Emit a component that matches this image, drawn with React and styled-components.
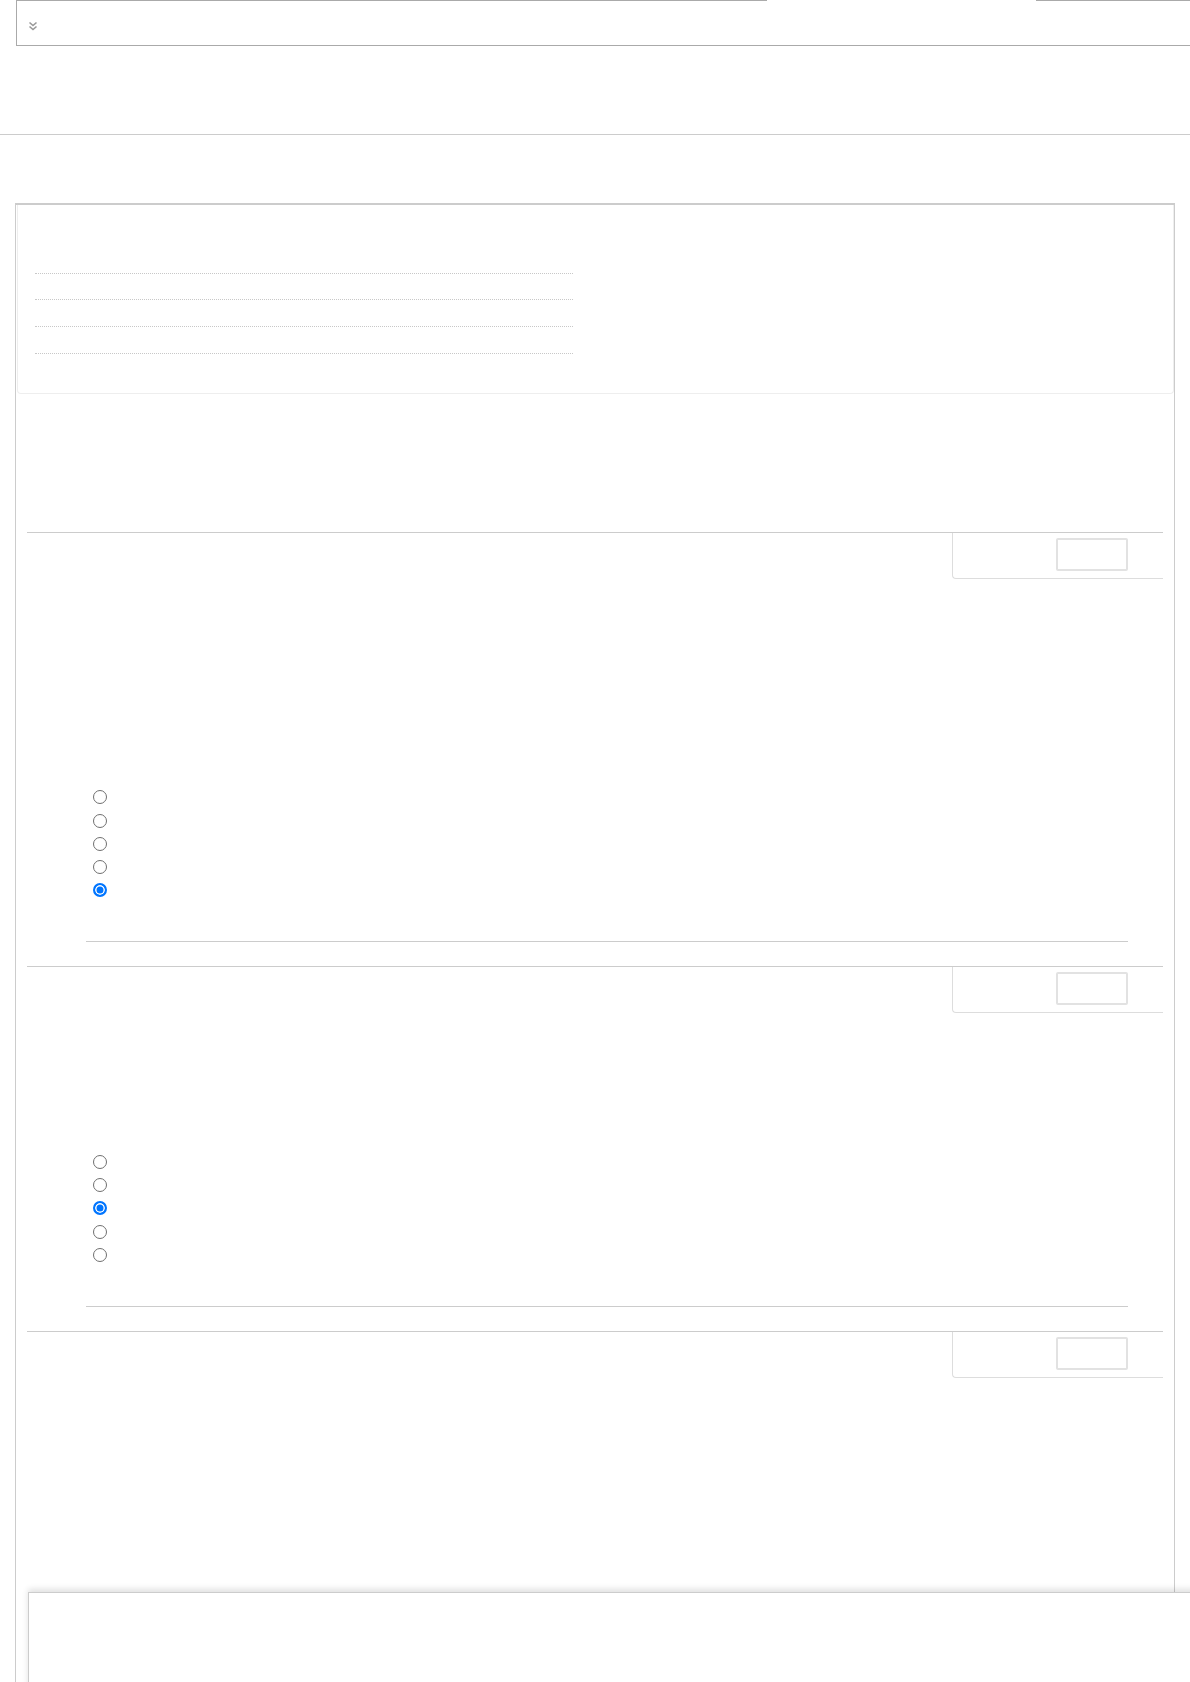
import React from 'react';
import styled, { createGlobalStyle } from 'styled-components';

const GlobalStyle = createGlobalStyle`
    html, body {
        margin: 0;
        padding: 0;
        background: #fff;
        overflow-x: hidden;
        font-family: "Liberation Sans", Arial, sans-serif;
        font-size: 14px;
        color: #333;
    }
`;

const TopBar = styled.div`
    position: relative;
    margin-left: 16px;
    width: 1200px;
    height: 44px;
    border: 1px solid #aaa;
    display: flex;
    align-items: center;
    padding-left: 11px;
    box-sizing: content-box;
    svg {
        margin-top: 5px;
    }
    &::after {
        content: '';
        position: absolute;
        top: -1px;
        left: 750px;
        width: 269px;
        height: 1px;
        background: #fff;
    }
`;

const Divider = styled.hr`
    margin: 88px 0 0;
    border: none;
    border-top: 1px solid #ccc;
    height: 0;
`;

const Panel = styled.div`
    margin: 68px 0 0 15px;
    width: 1158px;
    min-height: 1500px;
    border: 1px solid #ccc;
    border-top-width: 2px;
`;

const InfoBox = styled.div`
    margin-left: 1px;
    border: 1px solid #eee;
    border-top: none;
    border-radius: 0 0 4px 4px;
    padding: 42px 17px 39px;
`;

const DotRow = styled.div`
    width: 538px;
    height: 26.67px;
    box-sizing: border-box;
    border-bottom: 1px dotted #c8c8c8;
`;

const Question = styled.section`
    margin: ${p => p.$first ? '138px' : '0'} 11px 24px;
    border-top: 1px solid #ccc;
`;

const QuestionHead = styled.div`
    display: flex;
    justify-content: flex-end;
`;

const MarkTab = styled.div`
    width: 211px;
    height: 46px;
    padding: 5px 35px 0 0;
    box-sizing: border-box;
    display: flex;
    justify-content: flex-end;
    align-items: flex-start;
    border-left: 1px solid #ddd;
    border-bottom: 1px solid #ddd;
    border-bottom-left-radius: 4px;
`;

const MarkInput = styled.input`
    width: 72px;
    height: 33px;
    box-sizing: border-box;
    border: 2px solid #e2e2e2;
    border-radius: 2px;
    background: #fff;
    padding: 0;
`;

const Spacer = styled.div`
    height: ${p => p.$h}px;
`;

const Options = styled.div`
    display: flex;
    flex-direction: column;
`;

const OptionRow = styled.label`
    height: 23.25px;
    display: flex;
    align-items: center;
    padding-left: 66px;
`;

const Radio = styled.input.attrs({ type: 'radio' })`
    appearance: none;
    margin: 0;
    width: 14px;
    height: 14px;
    box-sizing: border-box;
    border: 1.5px solid #6f6f6f;
    border-radius: 50%;
    background: #fff;
    &:checked {
        border: 2px solid #0075ff;
        background: #0075ff;
        box-shadow: inset 0 0 0 1.5px #fff;
    }
`;

const Rule = styled.div`
    margin: 39.4px 35px 0 59px;
    border-top: 1px solid #ccc;
`;

const FooterCard = styled.div`
    position: fixed;
    left: 28px;
    right: -10px;
    bottom: -10px;
    height: 98px;
    background: #fff;
    border: 1px solid #ccc;
    box-shadow: 0 -3px 6px rgba(0, 0, 0, 0.12);
`;

function Chevrons() {
    return (
        <svg width="10" height="10" viewBox="0 0 10 10" fill="none" stroke="#999" strokeWidth="1.6">
            <polyline points="1.5,1.5 5,4.5 8.5,1.5" />
            <polyline points="1.5,5.5 5,8.5 8.5,5.5" />
        </svg>
    );
}

function QuestionBlock({ first, gap, checked, name }) {
    return (
        <Question $first={first}>
            <QuestionHead>
                <MarkTab>
                    <MarkInput type="text" aria-label="mark" />
                </MarkTab>
            </QuestionHead>
            {checked !== undefined && (
                <>
                    <Spacer $h={gap} />
                    <Options>
                        {[0, 1, 2, 3, 4].map(i => (
                            <OptionRow key={i}>
                                <Radio name={name} defaultChecked={i === checked} />
                            </OptionRow>
                        ))}
                    </Options>
                    <Rule />
                </>
            )}
        </Question>
    );
}

export default function App() {
    return (
        <>
            <GlobalStyle />
            <TopBar>
                <Chevrons />
            </TopBar>
            <Divider />
            <Panel>
                <InfoBox>
                    <DotRow />
                    <DotRow />
                    <DotRow />
                    <DotRow />
                </InfoBox>
                <QuestionBlock first gap={207} checked={4} name="q1" />
                <QuestionBlock gap={137} checked={2} name="q2" />
                <QuestionBlock />
            </Panel>
            <FooterCard />
        </>
    );
}
